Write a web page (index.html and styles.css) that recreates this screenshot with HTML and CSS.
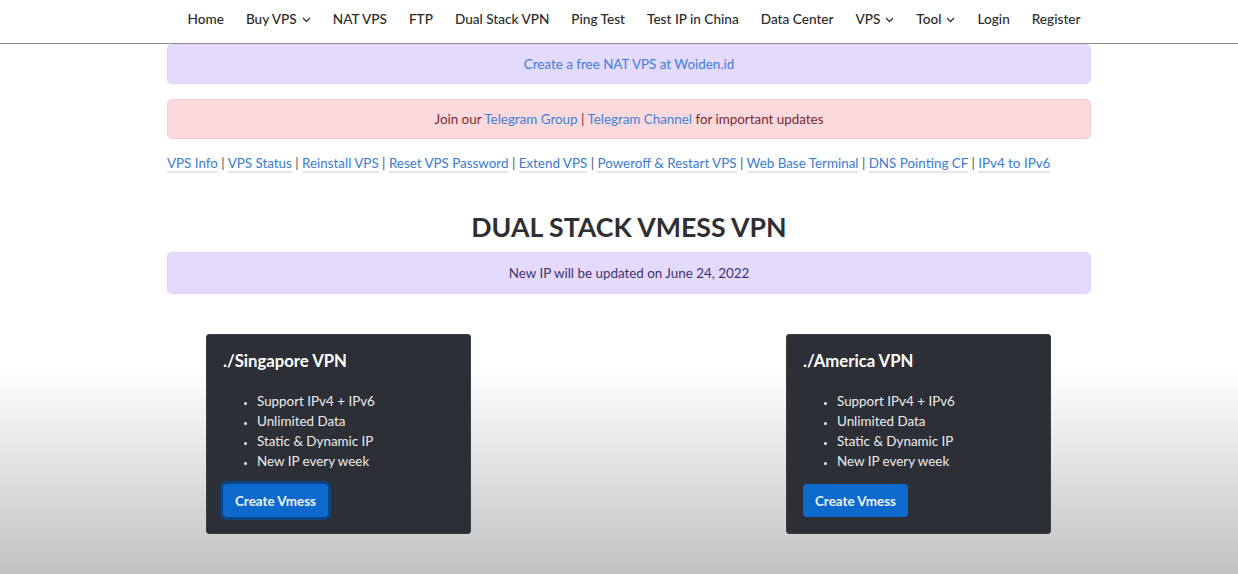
FILE: index.html
```html
<!DOCTYPE html>
<html lang="en">
<head>
<meta charset="utf-8">
<title>Dual Stack VMESS VPN</title>
<link rel="stylesheet" href="styles.css">
</head>
<body>
<nav class="topnav">
  <a href="#">Home</a>
  <a href="#">Buy VPS <svg class="chev" width="9" height="6" viewBox="0 0 9 6"><path d="M1 1l3.5 3.5L8 1" fill="none" stroke="#333" stroke-width="1.3"/></svg></a>
  <a href="#">NAT VPS</a>
  <a href="#">FTP</a>
  <a href="#">Dual Stack VPN</a>
  <a href="#">Ping Test</a>
  <a href="#">Test IP in China</a>
  <a href="#">Data Center</a>
  <a href="#">VPS <svg class="chev" width="9" height="6" viewBox="0 0 9 6"><path d="M1 1l3.5 3.5L8 1" fill="none" stroke="#333" stroke-width="1.3"/></svg></a>
  <a href="#">Tool <svg class="chev" width="9" height="6" viewBox="0 0 9 6"><path d="M1 1l3.5 3.5L8 1" fill="none" stroke="#333" stroke-width="1.3"/></svg></a>
  <a href="#">Login</a>
  <a href="#">Register</a>
</nav>
<main class="container">
  <div class="alert alert-purple"><a href="#">Create a free NAT VPS at Woiden.id</a></div>
  <div class="alert alert-pink">Join our <a href="#">Telegram Group</a> | <a href="#">Telegram Channel</a> for important updates</div>
  <div class="links">
    <a href="#">VPS Info</a> | <a href="#">VPS Status</a> | <a href="#">Reinstall VPS</a> | <a href="#">Reset VPS Password</a> | <a href="#">Extend VPS</a> | <a href="#">Poweroff &amp; Restart VPS</a> | <a href="#">Web Base Terminal</a> | <a href="#">DNS Pointing CF</a> | <a href="#">IPv4 to IPv6</a>
  </div>
  <h1 class="title">DUAL STACK VMESS VPN</h1>
  <div class="alert alert-info">New IP will be updated on June 24, 2022</div>
  <div class="cards">
    <div class="card">
      <h2>./Singapore VPN</h2>
      <ul>
        <li>Support IPv4 + IPv6</li>
        <li>Unlimited Data</li>
        <li>Static &amp; Dynamic IP</li>
        <li>New IP every week</li>
      </ul>
      <button class="btn btn-focus">Create Vmess</button>
    </div>
    <div class="card">
      <h2>./America VPN</h2>
      <ul>
        <li>Support IPv4 + IPv6</li>
        <li>Unlimited Data</li>
        <li>Static &amp; Dynamic IP</li>
        <li>New IP every week</li>
      </ul>
      <button class="btn">Create Vmess</button>
    </div>
  </div>
</main>
</body>
</html>
```
FILE: styles.css
```css
html, body {
  margin: 0;
  padding: 0;
}
body {
  font-family: Lato, "Liberation Sans", sans-serif;
  font-size: 13.4px;
  color: #333;
  min-height: 574px;
  background: linear-gradient(to bottom, #ffffff 0px, #ffffff 370px, #c2c2c2 574px);
  background-repeat: no-repeat;
}
a {
  color: #3b7ddd;
  text-decoration: none;
}
.topnav {
  height: 38px;
  padding-bottom: 5px;
  border-bottom: 1px solid #8c8c8c;
  display: flex;
  justify-content: center;
  align-items: center;
  gap: 22px;
  padding-left: 30px;
  box-sizing: content-box;
}
.topnav a {
  color: #2a2a2a;
  font-size: 13.6px;
  font-weight: 500;
  display: flex;
  align-items: center;
  gap: 5px;
}
.chev {
  margin-top: 1px;
}
.container {
  width: 924px;
  margin: 0 auto;
  padding-left: 20px;
}
.alert {
  text-align: center;
  line-height: 20px;
  border-radius: 5px;
  border: 1px solid transparent;
}
.alert-purple {
  background: #e4dafd;
  border-color: #ddd2fa;
  padding: 9px 0;
}
.alert-pink {
  margin-top: 15px;
  background: #fcd9dc;
  border-color: #f7ccd1;
  color: #7a2730;
  padding: 9px 0;
}
.alert-pink a {
  color: #3f7fd9;
}
.links {
  margin-top: 14px;
  line-height: 20px;
  color: #555;
}
.links a {
  color: #3a7bd5;
  border-bottom: 2px solid #e6e7ec;
}
.title {
  margin: 37px 0 0;
  text-align: center;
  font-size: 26.7px;
  line-height: 34px;
  font-weight: 700;
  color: #2f2f33;
}
.alert-info {
  margin-top: 8px;
  background: #e4dafd;
  border-color: #ddd2fa;
  color: #3f3270;
  padding: 10px 0;
}
.cards {
  margin-top: 40px;
  display: flex;
  justify-content: space-between;
  padding: 0 40px 0 39px;
}
.card {
  width: 265px;
  box-sizing: border-box;
  background: #2c2f36;
  border: 1px solid #3a3d44;
  border-radius: 3px;
  color: #ececec;
  padding: 15px 16px 16px;
}
.card h2 {
  margin: 0;
  font-size: 16.7px;
  line-height: 22px;
  font-weight: 700;
  color: #ffffff;
}
.card ul {
  margin: 19px 0 0;
  padding-left: 34px;
  line-height: 20px;
  font-size: 13.4px;
}
.card li::marker {
  font-size: 10px;
}
.btn {
  margin-top: 13px;
  height: 33px;
  padding: 0 12px;
  background: #0e69cc;
  color: #eef4fb;
  border: none;
  border-radius: 4px;
  font-family: Lato, "Liberation Sans", sans-serif;
  font-size: 13.4px;
  font-weight: 700;
}
.btn-focus {
  box-shadow: 0 0 0 3px #0b4585;
}
```
